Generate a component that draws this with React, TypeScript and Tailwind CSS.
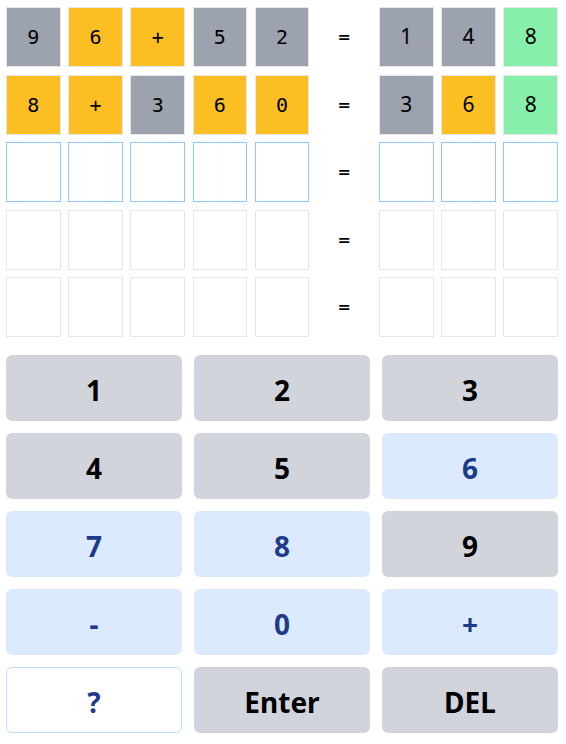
type Tile = { ch: string; state: 'gray' | 'yellow' | 'green' | 'empty' | 'active' };

const ROWS: { left: Tile[]; right: Tile[] }[] = [
  {
    left: [
      { ch: '9', state: 'gray' },
      { ch: '6', state: 'yellow' },
      { ch: '+', state: 'yellow' },
      { ch: '5', state: 'gray' },
      { ch: '2', state: 'gray' },
    ],
    right: [
      { ch: '1', state: 'gray' },
      { ch: '4', state: 'gray' },
      { ch: '8', state: 'green' },
    ],
  },
  {
    left: [
      { ch: '8', state: 'yellow' },
      { ch: '+', state: 'yellow' },
      { ch: '3', state: 'gray' },
      { ch: '6', state: 'yellow' },
      { ch: '0', state: 'yellow' },
    ],
    right: [
      { ch: '3', state: 'gray' },
      { ch: '6', state: 'yellow' },
      { ch: '8', state: 'green' },
    ],
  },
  ...[0, 1, 2].map((i) => {
    const state = i === 0 ? 'active' : 'empty';
    return {
      left: Array.from({ length: 5 }, () => ({ ch: '', state })) as Tile[],
      right: Array.from({ length: 3 }, () => ({ ch: '', state })) as Tile[],
    };
  }),
];

const tileClass: Record<Tile['state'], string> = {
  gray: 'bg-[#9ca3af] border-[#e5e7eb]',
  yellow: 'bg-[#fbbf24] border-[#e5e7eb]',
  green: 'bg-[#86efac] border-[#e5e7eb]',
  empty: 'bg-white border-[#e5e7eb]',
  active: 'bg-white border-[#93c5fd]',
};

type Key = { label: string; kind: 'gray' | 'blue' | 'outline' };
const KEYS: Key[] = [
  { label: '1', kind: 'gray' },
  { label: '2', kind: 'gray' },
  { label: '3', kind: 'gray' },
  { label: '4', kind: 'gray' },
  { label: '5', kind: 'gray' },
  { label: '6', kind: 'blue' },
  { label: '7', kind: 'blue' },
  { label: '8', kind: 'blue' },
  { label: '9', kind: 'gray' },
  { label: '-', kind: 'blue' },
  { label: '0', kind: 'blue' },
  { label: '+', kind: 'blue' },
  { label: '?', kind: 'outline' },
  { label: 'Enter', kind: 'gray' },
  { label: 'DEL', kind: 'gray' },
];

const keyClass: Record<Key['kind'], string> = {
  gray: 'bg-[#d1d5db] text-black',
  blue: 'bg-[#dbeafe] text-[#1e3a8a]',
  outline: 'bg-white text-[#1e3a8a] border border-[#bfdbfe]',
};

function Cell({ tile, mono }: { tile: Tile; mono: boolean }) {
  return (
    <div
      className={`h-[60px] border flex items-center justify-center text-black ${tileClass[tile.state]} ${
        mono ? "font-['DejaVu_Sans_Mono',monospace] text-[20px]" : "font-['Noto_Sans',sans-serif] text-[21px]"
      }`}
    >
      {tile.ch}
    </div>
  );
}

export default function App() {
  return (
    <div className="w-[566px] h-[744px] bg-white pt-[7px] pl-[6px]">
      <div className="w-[552px] grid grid-cols-9 gap-[7.5px]">
        {ROWS.map((row, r) => (
          <div key={r} className="contents">
            {row.left.map((t, i) => (
              <Cell key={`l${i}`} tile={t} mono />
            ))}
            <div className="h-[60px] flex items-center justify-center font-['DejaVu_Sans',sans-serif] text-[16px] font-bold text-black">
              =
            </div>
            {row.right.map((t, i) => (
              <Cell key={`r${i}`} tile={t} mono={false} />
            ))}
          </div>
        ))}
      </div>

      <div className="w-[552px] mt-[18px] grid grid-cols-3 gap-3">
        {KEYS.map((k) => (
          <button
            key={k.label}
            className={`h-[66px] pt-[4px] rounded-md flex items-center justify-center font-['Noto_Sans',sans-serif] font-bold text-[28px] ${keyClass[k.kind]}`}
          >
            {k.label}
          </button>
        ))}
      </div>
    </div>
  );
}
